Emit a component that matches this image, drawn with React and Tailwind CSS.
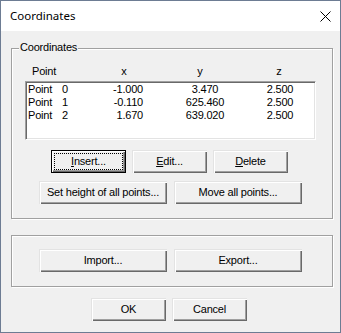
import React from "react";

const raised =
  "bg-[#f0f0f0] shadow-[inset_1px_1px_0_#e3e3e3,inset_2px_2px_0_#ffffff,inset_-1px_-1px_0_#696969,inset_-2px_-2px_0_#a0a0a0]";

function Btn({ w, children, isDefault, ml = "" }) {
  if (isDefault) {
    return (
      <div
        className={`${w} ${ml} h-[23px] shrink-0 border border-black bg-[#f0f0f0] shadow-[inset_1px_1px_0_#ffffff,inset_-1px_-1px_0_#696969,inset_-2px_-2px_0_#a0a0a0] p-[2px]`}
      >
        <div className="w-full h-full border border-dotted border-black flex items-center justify-center leading-[13px]">
          {children}
        </div>
      </div>
    );
  }
  return (
    <div
      className={`${w} ${ml} h-[23px] shrink-0 ${raised} flex items-center justify-center leading-[13px]`}
    >
      {children}
    </div>
  );
}

function Group({ label, className = "", children }) {
  return (
    <div
      className={`relative border border-[#a0a0a0] shadow-[inset_1px_1px_0_#ffffff,1px_1px_0_#ffffff] ${className}`}
    >
      {label && (
        <div className="absolute top-[-8px] left-[7px] px-[1px] bg-[#f0f0f0] leading-[13px] text-[11px]">
          {label}
        </div>
      )}
      {children}
    </div>
  );
}

const rows = [
  ["0", "-1.000", "3.470", "2.500"],
  ["1", "-0.110", "625.460", "2.500"],
  ["2", "1.670", "639.020", "2.500"],
];

export default function App() {
  return (
    <div
      className="w-[341px] h-[333px] border border-[#6d7c93] bg-[#f0f0f0] flex flex-col text-black text-[11px] tracking-[-0.2px]"
      style={{ fontFamily: '"Liberation Sans", Arial, sans-serif' }}
    >
      {/* Title bar */}
      <div className="h-[30px] bg-white flex items-center justify-between pl-[9px] pr-[9px]">
        <span
          className="text-[11.5px] tracking-normal"
          style={{ fontFamily: '"Noto Sans", sans-serif' }}
        >
          Coordinates
        </span>
        <svg width="11" height="11" viewBox="0 0 11 11" className="mt-[1px]">
          <path d="M0.5 0.5 L10.5 10.5 M10.5 0.5 L0.5 10.5" stroke="#000" strokeWidth="1" fill="none" />
        </svg>
      </div>

      <div className="flex flex-col pl-[10px] pt-[17px]">
        {/* Group 1 */}
        <Group label="Coordinates" className="w-[322px] h-[171px]">
          <div className="flex flex-col">
            {/* Header */}
            <div className="mt-[16px] ml-[20px] flex h-[13px] leading-[13px]">
              <div className="w-[62px]">Point</div>
              <div className="w-[60px] text-center">x</div>
              <div className="w-[92px] text-center">y</div>
              <div className="w-[66px] text-center">z</div>
            </div>
            {/* Listbox */}
            <div className="mt-[3px] ml-[13px] w-[291px] h-[59px] bg-white border border-t-[#a0a0a0] border-l-[#a0a0a0] border-r-white border-b-white shadow-[inset_1px_1px_0_#696969,inset_-1px_-1px_0_#e3e3e3] p-[1px]">
              {rows.map((r) => (
                <div key={r[0]} className="flex h-[13px] leading-[13px] whitespace-nowrap">
                  <div className="w-[35px] pl-[1px]">Point</div>
                  <div className="w-[20px]">{r[0]}</div>
                  <div className="w-[61px] text-right">{r[1]}</div>
                  <div className="w-[124px] flex justify-center">{r[2]}</div>
                  <div className="w-[26px] flex justify-center">{r[3]}</div>
                </div>
              ))}
            </div>
            {/* Buttons row 1 */}
            <div className="mt-[10px] flex gap-[6px] ml-[39px]">
              <Btn w="w-[75px]" isDefault>
                <span>
                  <span className="underline">I</span>nsert...
                </span>
              </Btn>
              <Btn w="w-[75px]">
                <span>
                  <span className="underline">E</span>dit...
                </span>
              </Btn>
              <Btn w="w-[75px]">
                <span>
                  <span className="underline">D</span>elete
                </span>
              </Btn>
            </div>
            {/* Buttons row 2 */}
            <div className="mt-[8px] flex gap-[7px] ml-[27px]">
              <Btn w="w-[128px]">Set height of all points...</Btn>
              <Btn w="w-[128px]">Move all points...</Btn>
            </div>
          </div>
        </Group>

        {/* Group 2 */}
        <Group className="mt-[16px] w-[322px] h-[52px]">
          <div className="mt-[13px] flex gap-[7px] ml-[27px]">
            <Btn w="w-[128px]">Import...</Btn>
            <Btn w="w-[128px]">Export...</Btn>
          </div>
        </Group>

        {/* OK / Cancel */}
        <div className="mt-[11px] flex gap-[6px] ml-[80px]">
          <Btn w="w-[75px]">OK</Btn>
          <Btn w="w-[75px]">Cancel</Btn>
        </div>
      </div>
    </div>
  );
}
